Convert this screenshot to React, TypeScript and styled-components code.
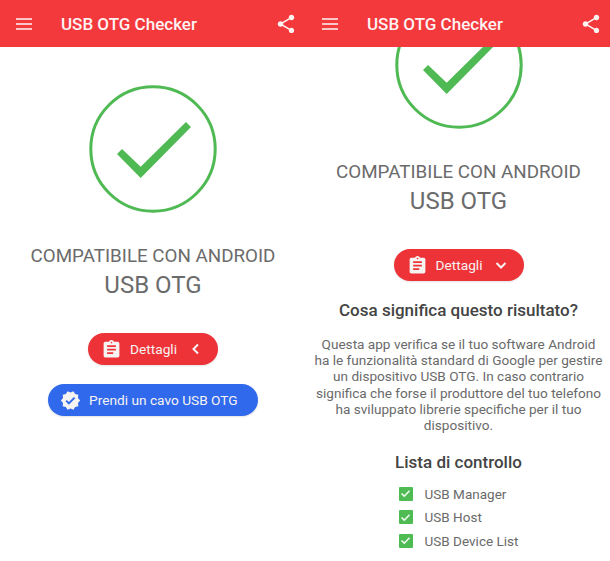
import React from "react";
import styled, { createGlobalStyle } from "styled-components";

const Global = createGlobalStyle`
  html, body { margin: 0; padding: 0; background: #fff; }
  body { font-family: Roboto, "Liberation Sans", sans-serif; }
`;

const Page = styled.div`
  display: flex;
  width: 610px;
  height: 561px;
  overflow: hidden;
`;

const Phone = styled.section<{ $width: number }>`
  display: flex;
  flex: none;
  flex-direction: column;
  width: ${(p) => p.$width}px;
  height: 561px;
  overflow: hidden;
  background: #fff;
`;

const Toolbar = styled.header`
  position: relative;
  z-index: 1;
  display: flex;
  align-items: center;
  flex: none;
  height: 47px;
  padding: 0 9px 0 15px;
  background: #f4393d;
  color: #fdf3f3;
`;

const ToolbarTitle = styled.h1`
  flex: 1;
  margin: 0 0 0 28px;
  font-size: 17px;
  font-weight: 500;
  letter-spacing: 0;
`;

const Content = styled.main<{ $scroll: number }>`
  display: flex;
  flex-direction: column;
  align-items: center;
  margin-top: ${(p) => 38 - p.$scroll}px;
`;

const ResultMark = styled.svg`
  display: block;
  flex: none;
`;

const Status = styled.p`
  margin: 31px 0 0;
  font-size: 18.8px;
  line-height: 24px;
  font-weight: 400;
  color: #6b6b6b;
  white-space: nowrap;
`;

const Feature = styled.p`
  margin: 2px 0 0;
  font-size: 24px;
  line-height: 30px;
  font-weight: 400;
  color: #6b6b6b;
`;

const Pill = styled.button<{ $tone: "red" | "blue"; $width: number; $first?: boolean }>`
  display: flex;
  align-items: center;
  flex: none;
  width: ${(p) => p.$width}px;
  height: 32px;
  margin: ${(p) => (p.$first ? "33px" : "19px")} 0 0;
  padding: 0 0 0 ${(p) => (p.$tone === "red" ? 13 : 12)}px;
  border: 0;
  border-radius: 16px;
  background: ${(p) => (p.$tone === "red" ? "#ee3338" : "#3069ec")};
  color: #f6f3f3;
  font-family: inherit;
  font-size: 13.7px;
  box-shadow: 0 1px 2px rgba(0, 0, 0, 0.12);
`;

const PillText = styled.span<{ $gap: number }>`
  margin-left: ${(p) => p.$gap}px;
  white-space: nowrap;
`;

const PillChevron = styled.svg`
  display: block;
  margin-left: 9px;
`;

const Heading = styled.h2<{ $top: number }>`
  margin: ${(p) => p.$top}px 0 0;
  font-size: 17px;
  line-height: 22px;
  font-weight: 500;
  color: #444;
  white-space: nowrap;
`;

const Explanation = styled.p`
  margin: 15px 0 0;
  width: 289px;
  font-size: 13.6px;
  line-height: 16.2px;
  color: #6a6a6a;
  text-align: center;
`;

const CheckList = styled.ul`
  display: flex;
  flex-direction: column;
  gap: 6px;
  margin: 12px 0 0;
  padding: 0;
  list-style: none;
`;

const CheckItem = styled.li`
  display: flex;
  align-items: center;
  gap: 12px;
  height: 17.5px;
  font-size: 13.5px;
  color: #6a6a6a;
  white-space: nowrap;
`;

const CheckBox = styled.span`
  display: flex;
  align-items: center;
  justify-content: center;
  width: 14px;
  height: 14px;
  border-radius: 1px;
  background: #4fbb53;
`;

const MenuIcon = () => (
  <svg width="18" height="14" viewBox="0 0 18 14" fill="none" stroke="currentColor" strokeWidth="1.7">
    <path d="M1 2h16M1 7h16M1 12h16" />
  </svg>
);

const ShareIcon = () => (
  <svg width="22" height="22" viewBox="0 0 24 24" fill="currentColor">
    <path d="M18 16.08c-.76 0-1.44.3-1.96.77L8.91 12.7c.05-.23.09-.46.09-.7s-.04-.47-.09-.7l7.05-4.11c.54.5 1.25.81 2.04.81 1.66 0 3-1.34 3-3s-1.34-3-3-3-3 1.34-3 3c0 .24.04.47.09.7L8.04 9.81C7.5 9.31 6.79 9 6 9c-1.66 0-3 1.34-3 3s1.34 3 3 3c.79 0 1.5-.31 2.04-.81l7.12 4.16c-.05.21-.08.43-.08.65 0 1.61 1.31 2.92 2.92 2.92 1.61 0 2.92-1.31 2.92-2.92s-1.31-2.92-2.92-2.92z" />
  </svg>
);

const ClipboardIcon = () => (
  <svg width="21" height="21" viewBox="0 0 24 24" fill="currentColor">
    <path d="M19 3h-4.18C14.4 1.84 13.3 1 12 1c-1.3 0-2.4.84-2.82 2H5c-1.1 0-2 .9-2 2v14c0 1.1.9 2 2 2h14c1.1 0 2-.9 2-2V5c0-1.1-.9-2-2-2zm-7 0c.55 0 1 .45 1 1s-.45 1-1 1-1-.45-1-1 .45-1 1-1zm2 14H7v-2h7v2zm3-4H7v-2h10v2zm0-4H7V7h10v2z" />
  </svg>
);

const VerifiedIcon = () => (
  <svg width="21" height="21" viewBox="0 0 24 24" fill="currentColor">
    <path d="M23 12l-2.44-2.79.34-3.69-3.61-.82-1.89-3.2L12 2.96 8.6 1.5 6.71 4.69 3.1 5.5l.34 3.7L1 12l2.44 2.79-.34 3.7 3.61.82L8.6 22.5l3.4-1.47 3.4 1.46 1.89-3.19 3.61-.82-.34-3.69L23 12zm-12.91 4.72l-3.8-3.81 1.48-1.48 2.32 2.33 5.85-5.87 1.48 1.48-7.33 7.35z" />
  </svg>
);

const Chevron = ({ down }: { down?: boolean }) => (
  <PillChevron width="20" height="20" viewBox="0 0 20 20" fill="none" stroke="currentColor" strokeWidth="2">
    <path d={down ? "M5.5 8l4.500 4.500L14.500 8" : "M12 5.500L7.500 10l4.500 4.500"} />
  </PillChevron>
);

const Mark = () => (
  <ResultMark width="128" height="128" viewBox="0 0 128 128" fill="none">
    <circle cx="64" cy="64" r="62.2" stroke="#4fb953" strokeWidth="3" />
    <polygon points="28,69 33,64 51.700,81.700 97,37 102,42 51.700,93" fill="#4fb953" />
  </ResultMark>
);

const Bar = () => (
  <Toolbar>
    <MenuIcon />
    <ToolbarTitle>USB OTG Checker</ToolbarTitle>
    <ShareIcon />
  </Toolbar>
);

const SmallCheck = () => (
  <svg width="11" height="11" viewBox="0 0 11 11" fill="none" stroke="#f2fbf2" strokeWidth="1.6">
    <path d="M1.500 5.500L4.300 8.200 9.500 2.800" />
  </svg>
);

const checks = ["USB Manager", "USB Host", "USB Device List"];

export default function App() {
  return (
    <Page>
      <Global />
      <Phone $width={306}>
        <Bar />
        <Content $scroll={0}>
          <Mark />
          <Status>COMPATIBILE CON ANDROID</Status>
          <Feature>USB OTG</Feature>
          <Pill $tone="red" $width={130} $first>
            <ClipboardIcon />
            <PillText $gap={8}>Dettagli</PillText>
            <Chevron />
          </Pill>
          <Pill $tone="blue" $width={210}>
            <VerifiedIcon />
            <PillText $gap={8}>Prendi un cavo USB OTG</PillText>
          </Pill>
        </Content>
      </Phone>
      <Phone $width={305}>
        <Bar />
        <Content $scroll={84}>
          <Mark />
          <Status>COMPATIBILE CON ANDROID</Status>
          <Feature>USB OTG</Feature>
          <Pill $tone="red" $width={130} $first>
            <ClipboardIcon />
            <PillText $gap={8}>Dettagli</PillText>
            <Chevron down />
          </Pill>
          <Heading $top={18}>Cosa significa questo risultato?</Heading>
          <Explanation>
            Questa app verifica se il tuo software Android ha le funzionalità standard di Google per gestire un
            dispositivo USB OTG. In caso contrario significa che forse il produttore del tuo telefono ha sviluppato
            librerie specifiche per il tuo dispositivo.
          </Explanation>
          <Heading $top={18}>Lista di controllo</Heading>
          <CheckList>
            {checks.map((c) => (
              <CheckItem key={c}>
                <CheckBox>
                  <SmallCheck />
                </CheckBox>
                {c}
              </CheckItem>
            ))}
          </CheckList>
        </Content>
      </Phone>
    </Page>
  );
}
